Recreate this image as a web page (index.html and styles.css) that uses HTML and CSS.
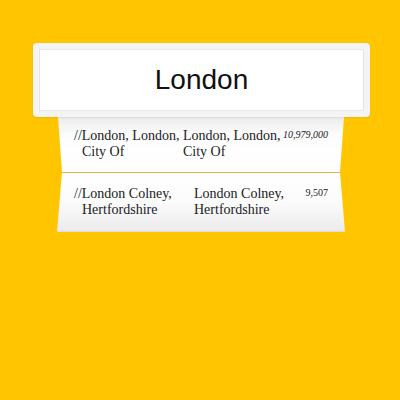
FILE: index.html
```html
<!DOCTYPE html>
<html>
<head>
<meta charset="utf-8">
<link rel="stylesheet" href="styles.css">
</head>
<body>
<div class="wrap">
  <div class="card">
    <div class="field">London</div>
  </div>
  <div class="list">
    <div class="row row-a">
      <div class="name">//London, London, City Of</div>
      <div class="name2">London, London, City Of</div>
      <div class="pop pop-it">10,979,000</div>
    </div>
    <div class="row row-b">
      <div class="name">//London Colney, Hertfordshire</div>
      <div class="name2">London Colney, Hertfordshire</div>
      <div class="pop">9,507</div>
    </div>
  </div>
</div>
</body>
</html>
```
FILE: styles.css
```css
html, body {
  margin: 0;
  padding: 0;
  background: #ffc600;
  height: 100%;
}
.wrap {
  padding: 43px 30px 0 33px;
  width: 337px;
}
.card {
  background: #f4f4f4;
  border-radius: 4px;
  padding: 6px;
  box-shadow: 0 1px 2px rgba(0, 0, 0, 0.08);
  position: relative;
  z-index: 1;
}
.field {
  height: 60px;
  border: 1px solid #e6e6e6;
  background: #fff;
  display: flex;
  align-items: center;
  justify-content: center;
  font-family: "Liberation Sans", Arial, sans-serif;
  font-size: 28px;
  color: #111;
}
.list {
  margin: 0 25px 0 24px;
  width: 288px;
}
.row {
  display: grid;
  box-sizing: border-box;
  padding-left: 25px;
  padding-right: 17px;
  font-family: "Liberation Serif", "Times New Roman", serif;
  font-size: 14px;
  line-height: 16px;
  color: #222;
}
.row-a {
  height: 55px;
  padding-top: 11px;
  grid-template-columns: 101px 1fr auto;
  background: linear-gradient(to bottom, #ebebeb 0%, #fbfbfb 30%, #ffffff 60%, #fdfdfd 100%);
  clip-path: polygon(1px 0, 287px 0, 283px 100%, 5px 100%);
}
.row-b {
  height: 60px;
  padding-top: 13px;
  border-top: 1px solid #e2b54c;
  grid-template-columns: 112px 1fr auto;
  background: linear-gradient(to bottom, #ffffff 0%, #fcfcfc 45%, #ececec 97%, #d9d9d9 100%);
  clip-path: polygon(5px 0, 283px 0, 288px 100%, 0 100%);
}
.name {
  text-indent: -8px;
}
.pop {
  font-size: 10px;
  line-height: 10px;
  margin-top: 2px;
  text-align: right;
}
.pop-it {
  font-style: italic;
}
```
